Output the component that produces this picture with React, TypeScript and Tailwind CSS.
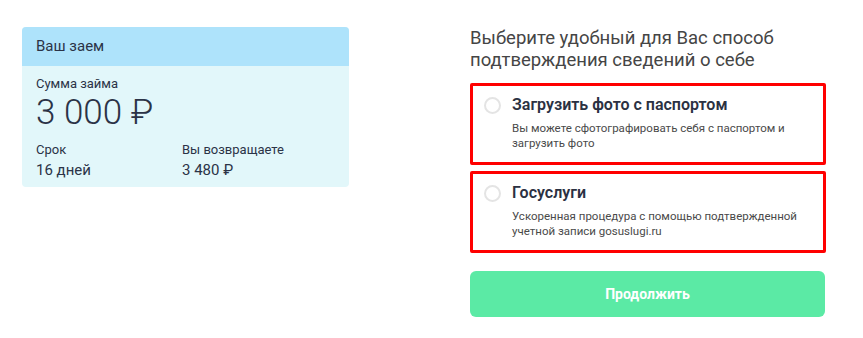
export default function App() {
  return (
    <div className="flex min-h-[338px] bg-white pl-[22px] pt-[27px] font-['Roboto',sans-serif] text-[#2b3347]">
      <section className="h-[160px] w-[327px] overflow-hidden rounded-[4px] bg-[#e2f7fa]">
        <div className="flex h-[39px] items-center bg-[#aee3fb] px-[14px] text-[15px]">Ваш заем</div>
        <div className="px-[14px] pt-[10px]">
          <div className="text-[13px] leading-[16px]">Сумма займа</div>
          <div className="mt-[2px] text-[35px] leading-[38px] font-light">3 000 ₽</div>
          <div className="mt-[10px] grid grid-cols-[146px_1fr]">
            <div>
              <div className="text-[13px] leading-[16px]">Срок</div>
              <div className="mt-[3px] text-[15px] leading-[19px]">16 дней</div>
            </div>
            <div>
              <div className="text-[13px] leading-[16px]">Вы возвращаете</div>
              <div className="mt-[3px] text-[15px] leading-[19px]">3 480 ₽</div>
            </div>
          </div>
        </div>
      </section>

      <section className="ml-[121px] w-[356px]">
        <h2 className="text-[18.5px] leading-[22px] font-normal text-[#454545]">
          Выберите удобный для Вас способ
          <br />
          подтверждения сведений о себе
        </h2>
        <div className="mt-[12px] flex flex-col gap-[6px]">
          <Option
            title="Загрузить фото с паспортом"
            text="Вы можете сфотографировать себя с паспортом и загрузить фото"
          />
          <Option
            title="Госуслуги"
            text="Ускоренная процедура с помощью подтвержденной учетной записи gosuslugi.ru"
          />
        </div>
        <button className="mt-[18px] flex h-[46px] w-[355px] items-center justify-center rounded-[6px] bg-[#5beaa5] text-[14px] font-bold text-white">
          Продолжить
        </button>
      </section>
    </div>
  );
}

function Option({ title, text }: { title: string; text: string }) {
  return (
    <div className="flex h-[82px] rounded-[2px] border-[3px] border-[#ff0000] pt-[9px] pl-[11px] pr-[14px]">
      <div className="mt-[2px] size-[17px] shrink-0 rounded-full border-2 border-[#e4e4e4]" />
      <div className="ml-[11px]">
        <div className="text-[16px] leading-[20px] font-semibold text-[#2b3142]">{title}</div>
        <div className="mt-[6px] text-[11.5px] leading-[15px] text-[#4a4a4a]">{text}</div>
      </div>
    </div>
  );
}
